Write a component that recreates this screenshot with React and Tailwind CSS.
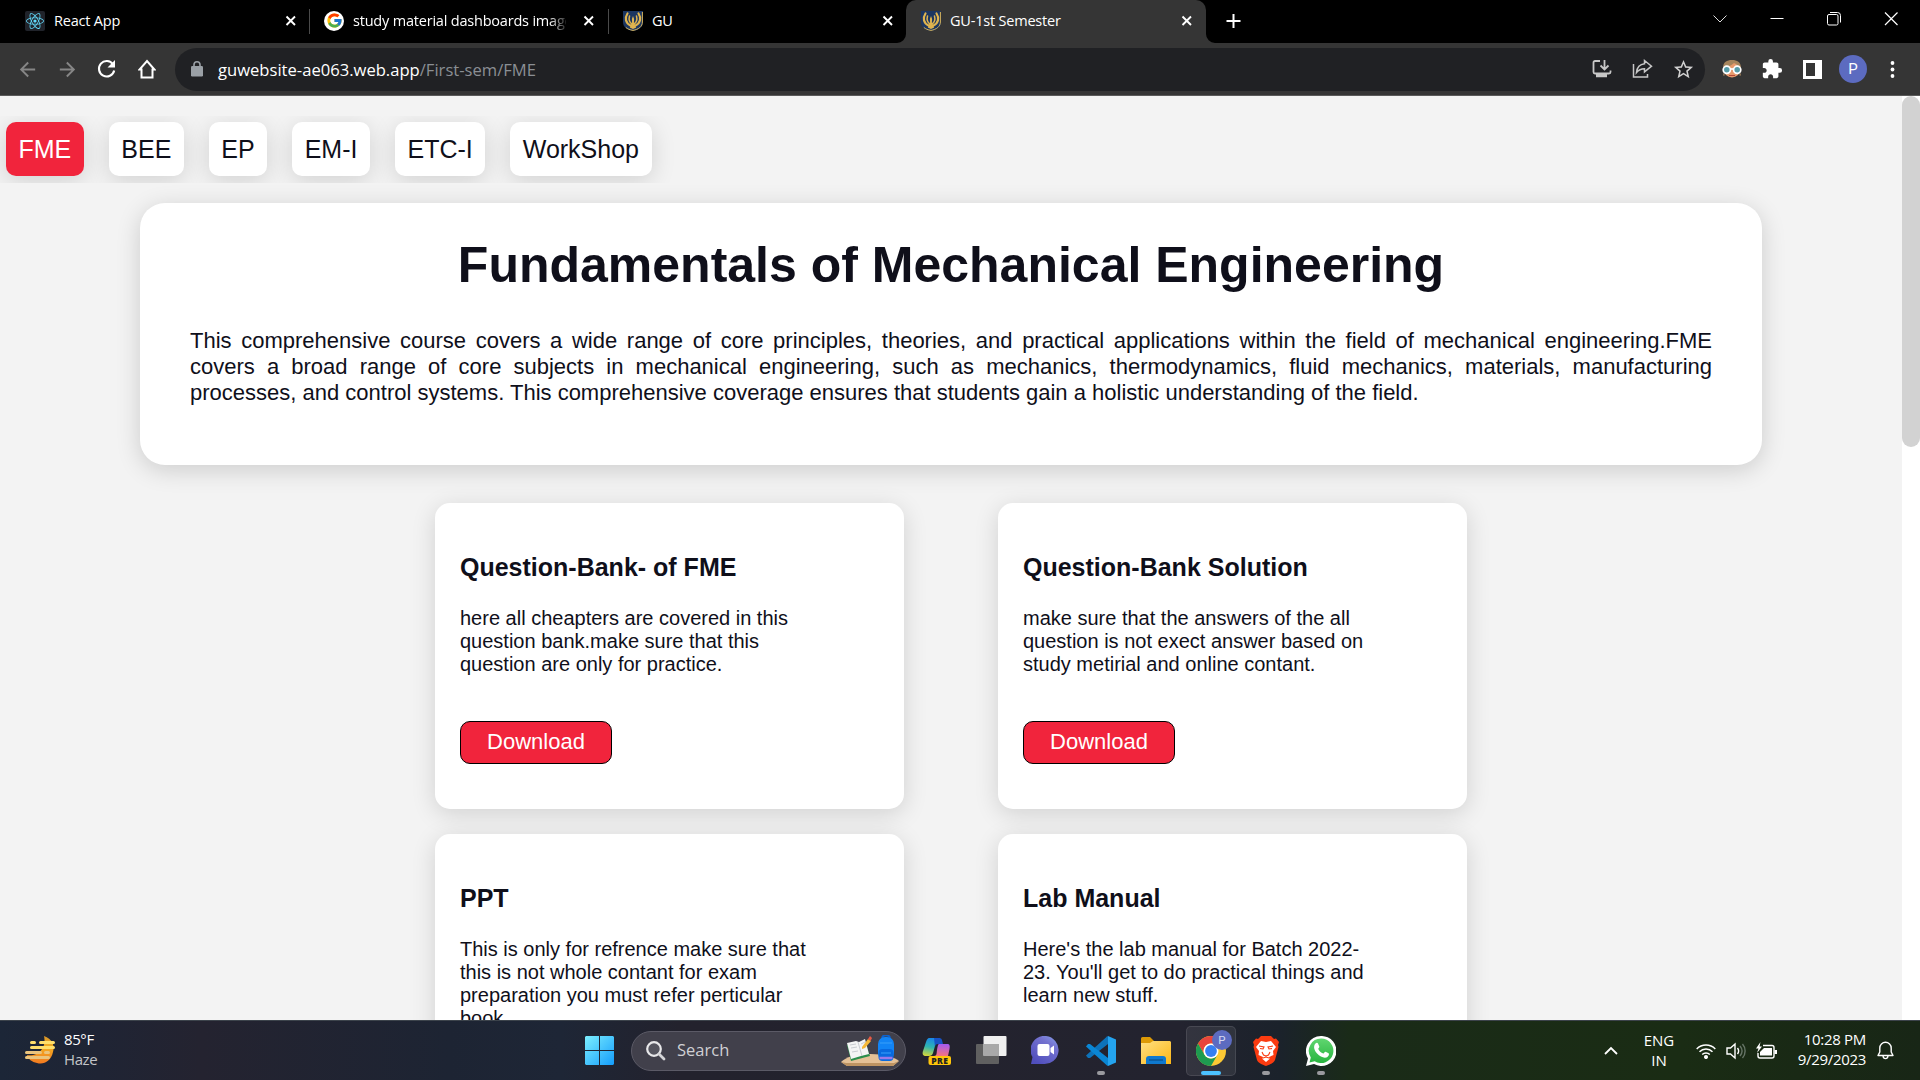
import React from "react";
import { FaReact } from "react-icons/fa";
import { FcGoogle } from "react-icons/fc";
import { MdExtension, MdStarBorder, MdArrowBack, MdArrowForward } from "react-icons/md";

const ui = "font-['Open_Sans','Noto_Sans',sans-serif]";

function GuCrest() {
  return (
    <svg width="20" height="20" viewBox="0 0 20 20" className="shrink-0">
      <path d="M0 0h20v11c0 5-4 8-10 9C4 19 0 16 0 11z" fill="#1c3661" />
      <path d="M19.400 1v10c0 4.500-4 7.500-9.400 8.400-3-.5-5.500-1.500-7.200-3" fill="none" stroke="#d6b35a" strokeWidth="1" />
      <g fill="none" stroke="#dfb44f" strokeLinecap="round">
        <path d="M4.500 2.500C1.500 7 2.500 12 7.500 14.500M15.500 2.500c3 4.500 2 9.500-3 12" strokeWidth="2.200" />
        <path d="M6.500 5C5.500 9 6.500 11.500 9 13M13.500 5C14.500 9 13.500 11.500 11 13" strokeWidth="1.500" />
      </g>
      <path d="M10 5l1.100 3-.2 3.500 2.300 5L10 18l-3.200-1.500 2.300-5L8.900 8z" fill="#dfb44f" />
    </svg>
  );
}

function CloseX() {
  return (
    <svg width="12" height="12" viewBox="0 0 12 12" className="shrink-0">
      <path d="M1.500 1.500l8.500 8.500M10 1.500L1.500 10" stroke="#fff" strokeWidth="1.900" />
    </svg>
  );
}

function Tab({ icon, title, className, titleClass = "" }) {
  return (
    <div className={"flex h-[43px] shrink-0 items-center pb-[2px] " + className}>
      {icon}
      <span className={"ml-[9px] flex-1 overflow-hidden whitespace-nowrap text-[14.500px] tracking-[-0.200px] text-white " + titleClass}>{title}</span>
      <CloseX />
    </div>
  );
}

function TabStrip() {
  return (
    <div className="flex h-[43px] items-start bg-black">
      <Tab
        className="w-[309px] pl-[25px] pr-[12px]"
        icon={
          <span className="flex size-5 items-center justify-center rounded-[2px] bg-[#20232a]">
            <FaReact size={18} color="#61dafb" />
          </span>
        }
        title="React App"
      />
      <span className="mt-[9px] h-[25px] w-px bg-[#4a4a4a]" />
      <Tab
        className="w-[298px] pl-[14px] pr-[13px]"
        icon={
          <span className="flex size-5 items-center justify-center rounded-full bg-white">
            <FcGoogle size={17} />
          </span>
        }
        title="study material dashboards images"
        titleClass="mr-[17px] [mask-image:linear-gradient(to_right,#000_196px,transparent_216px)]"
      />
      <span className="mt-[9px] h-[25px] w-px bg-[#4a4a4a]" />
      <Tab className="w-[297px] pl-[14px] pr-[12px]" icon={<GuCrest />} title="GU" />
      <div className="relative">
        <svg className="absolute -left-[9px] bottom-0" width="9" height="9" viewBox="0 0 9 9"><path d="M9 0v9H0a9 9 0 0 0 9-9" fill="#353535" /></svg>
        <Tab className="w-[300px] rounded-t-[10px] bg-[#353535] pl-[15px] pr-[13px]" icon={<GuCrest />} title="GU-1st Semester" />
        <svg className="absolute -right-[9px] bottom-0" width="9" height="9" viewBox="0 0 9 9"><path d="M0 0v9h9a9 9 0 0 1-9-9" fill="#353535" /></svg>
      </div>
      <svg className="ml-[20px] mt-[13px]" width="15" height="16" viewBox="0 0 15 16"><path d="M7.500 1v14M.5 8h14" stroke="#fff" strokeWidth="2" /></svg>
      <div className="ml-auto flex items-start pt-[12px] pr-[21px]">
        <svg width="14" height="14" viewBox="0 0 14 14"><path d="M.5 3.500l6.500 6.500 6.500-6.500" fill="none" stroke="#ddd" strokeWidth="1" /></svg>
        <svg className="ml-[43px]" width="14" height="14" viewBox="0 0 14 14"><path d="M.5 6.500h13" stroke="#fff" strokeWidth="1" /></svg>
        <svg className="ml-[43px]" width="14" height="14" viewBox="0 0 14 14"><g fill="none" stroke="#fff"><rect x=".5" y="2.500" width="10.500" height="10.500" rx="1.500" /><path d="M3 .5h7.500a3 3 0 0 1 3 3V10.500" /></g></svg>
        <svg className="ml-[43px]" width="15" height="14" viewBox="0 0 15 14"><path d="M1 .5l12.500 12.500M13.500.5L1 13" stroke="#fff" strokeWidth="1.200" /></svg>
      </div>
    </div>
  );
}

function Toolbar() {
  return (
    <div className="flex h-[53px] items-center border-b border-[#5a5a5a] bg-[#353535] text-white">
      <MdArrowBack size={23} color="#868686" className="ml-[16px]" />
      <MdArrowForward size={23} color="#868686" className="ml-[17px]" />
      <svg className="ml-[18px]" width="20" height="20" viewBox="0 0 20 20"><path d="M16 5.300A7.700 7.700 0 1 0 17.200 11.500" fill="none" stroke="#fff" strokeWidth="2.100" /><path d="M18 1v7.500h-7.500z" fill="#fff" /></svg>
      <svg className="ml-[21px]" width="18" height="20" viewBox="0 0 18 20"><path d="M3.500 18.500v-8H1.500L9 2l7.500 8.500h-2v8z" fill="none" stroke="#fff" strokeWidth="2" /></svg>
      <div className="ml-[19px] flex h-[43px] w-[1530px] items-center rounded-full bg-[#202124] pl-[16px]">
        <svg width="12" height="16" viewBox="0 0 12 16"><rect x="0" y="5" width="12" height="10.500" rx="1.200" fill="#9aa0a6" /><path d="M3 6V3.800a3 3 0 0 1 6 0V6" fill="none" stroke="#9aa0a6" strokeWidth="1.600" /></svg>
        <span className="ml-[15px] flex-1 pt-[2px] text-[16.600px]">
          <span className="text-white">guwebsite-ae063.web.app</span>
          <span className="text-[#8b8f94]">/First-sem/FME</span>
        </span>
        <svg width="20" height="20" viewBox="0 0 20 20" fill="none" stroke="#c7c7c7" strokeWidth="1.800"><path d="M8 2H3a1.500 1.500 0 0 0-1.500 1.500V13A1.500 1.500 0 0 0 3 14.500h14a1.500 1.500 0 0 0 1.500-1.500v-1.500M12.500 1v9M8.500 6.500l4 4 4-4" /><path d="M4 16.500h11" strokeWidth="3.500" /></svg>
        <svg className="ml-[20px]" width="21" height="20" viewBox="0 0 21 20" fill="none" stroke="#c7c7c7" strokeWidth="1.500"><path d="M1.500 5v13h14v-3" /><path d="M12.500 1.500l7 5.700-7 5.700v-3.200C9 9.700 6.500 11 4.500 13.500 5 9 7.500 5.300 12.500 4.800z" /></svg>
        <MdStarBorder size={23} color="#d0d0d0" className="ml-[19px] mr-[10px]" />
      </div>
      <svg className="ml-[17px]" width="20" height="20" viewBox="0 0 20 20">
        <circle cx="10" cy="10" r="8.500" fill="#e79a6c" /><path d="M1 9C1 3 5 1 10 1s9 2 9 8c-3-2-4-4-7-5-2 2-6 4-11 5" fill="#a5845c" />
        <path d="M1 14l2 2-1.500 1M19 14l-2 2 1.500 1" fill="#a5845c" />
        <g fill="#569ca8" stroke="#fff" strokeWidth="1.700"><circle cx="4.800" cy="10.800" r="3.600" /><circle cx="15.200" cy="10.800" r="3.600" /><path d="M8 10h4" /></g>
        <path d="M7 16.500h6" stroke="#b44839" />
      </svg>
      <MdExtension size={22} className="ml-[19px]" />
      <svg className="ml-[20px]" width="19" height="19" viewBox="0 0 19 19"><path d="M0 0h19v19H0zM3 3v13h9V3z" fill="#fff" fillRule="evenodd" /></svg>
      <span className="ml-[17px] flex size-7 items-center justify-center rounded-full bg-[#5c6bc0] font-[Roboto,sans-serif] text-[15px]">P</span>
      <svg className="ml-[23px]" width="5" height="17" viewBox="0 0 5 17"><g fill="#fff"><circle cx="2.500" cy="2" r="1.900" /><circle cx="2.500" cy="8.500" r="1.900" /><circle cx="2.500" cy="15" r="1.900" /></g></svg>
    </div>
  );
}

const subjects = ["FME", "BEE", "EP", "EM-I", "ETC-I", "WorkShop"];

const resources = [
  { title: "Question-Bank- of FME", lines: ["here all cheapters are covered in this", "question bank.make sure that this", "question are only for practice."] },
  { title: "Question-Bank Solution", lines: ["make sure that the answers of the all", "question is not exect answer based on", "study metirial and online contant."] },
  { title: "PPT", lines: ["This is only for refrence make sure that", "this is not whole contant for exam", "preparation you must refer perticular", "book."] },
  { title: "Lab Manual", lines: ["Here's the lab manual for Batch 2022-", "23. You'll get to do practical things and", "learn new stuff."] },
];

function Resource({ title, lines }) {
  return (
    <article className="h-[306px] rounded-[15px] bg-white px-[25px] pt-[50px] shadow-[0_5px_25px_rgba(0,0,0,0.14)]">
      <h3 className="text-[25px] font-bold leading-[29px]">{title}</h3>
      <p className="mt-[25px] h-[69px] whitespace-nowrap text-[20px] leading-[23px]">
        {lines.map((line) => (
          <span key={line} className="block">{line}</span>
        ))}
      </p>
      <button className="mt-[45px] h-[43px] w-[152px] rounded-[10px] border border-black bg-[#f1243c] pb-[2px] text-[22px] text-white">Download</button>
    </article>
  );
}

function Page() {
  return (
    <div className="flex h-[924px] bg-[#f3f3f3] font-['Liberation_Sans',Arial,sans-serif] text-[#0f0f1a]">
      <main className="w-[1902px] overflow-hidden">
        <nav className="mt-[20px] flex h-[67px] w-[677px] gap-[25px] overflow-hidden pl-[6px] pt-[6px]">
          {subjects.map((s) => (
            <span key={s} className={"flex h-[54px] shrink-0 items-center rounded-[10px] px-[12.500px] pt-[2px] text-[25px] shadow-[0_5px_25px_rgba(0,0,0,0.14)] " + (s === "FME" ? "bg-[#f1243c] text-white" : "bg-white")}>{s}</span>
          ))}
        </nav>
        <section className="ml-[140px] mt-[20px] h-[262px] w-[1622px] rounded-[25px] bg-white px-[50px] pt-[33px] shadow-[0_5px_25px_rgba(0,0,0,0.16)]">
          <h1 className="text-center text-[50px] font-bold leading-[58px]">Fundamentals of Mechanical Engineering</h1>
          <p className="mt-[34px] text-justify text-[22px] leading-[26px]">
            This comprehensive course covers a wide range of core principles, theories, and practical applications within the field of mechanical engineering.FME covers a broad range of core subjects in mechanical engineering, such as mechanics, thermodynamics, fluid mechanics, materials, manufacturing processes, and control systems. This comprehensive coverage ensures that students gain a holistic understanding of the field.
          </p>
        </section>
        <section className="ml-[435px] mt-[38px] grid grid-cols-[469px_469px] gap-x-[94px] gap-y-[25px]">
          {resources.map((r) => (
            <Resource key={r.title} {...r} />
          ))}
        </section>
      </main>
      <div className="w-[18px] bg-white">
        <div className="h-[351px] rounded-[9px] bg-[#d2d2d2]" />
      </div>
    </div>
  );
}

function WindowsLogo() {
  return (
    <svg width="29" height="29" viewBox="0 0 29 29">
      <defs><linearGradient id="win" x1="0" y1="0" x2="1" y2="1"><stop stopColor="#7ceefe" /><stop offset="1" stopColor="#149dfc" /></linearGradient></defs>
      <path d="M1 0h13v14H0V1zM15 0h13l1 1v13H15zM0 15h14v14H1l-1-1zM15 15h14v13l-1 1H15z" fill="url(#win)" />
    </svg>
  );
}

function SearchScene() {
  return (
    <svg width="58" height="32" viewBox="0 0 58 32">
      <path d="M0 27c5-5 14-8 29-8s24 3 29 7l-6 5H6z" fill="#e4c096" /><path d="M0 27l5 1h48l5-2-6 5H6z" fill="#bd9362" />
      <path d="M6 10l18-4 5 15-19 5z" fill="#2b8e4c" /><path d="M6 8l9-2 3 1 6-3 4 15-8 2-10 3z" fill="#f4f4f4" /><path d="M17 7l4 14M9 10l6-1M10 13l6-1M11 17l6-1M20 9l4-2M21 13l4-2" stroke="#c9ccd1" />
      <path d="M21 12l6-8 3 2-6 7-3 1z" fill="#f6b837" /><path d="M27 4l2-3 2 2-1.500 3z" fill="#e75a45" />
      <path d="M41 4c0-5 8-5 8 0" fill="none" stroke="#0d62cd" strokeWidth="2" /><rect x="37" y="2" width="16" height="23" rx="7" fill="#1284f5" /><rect x="37.500" y="14" width="15" height="12" rx="4" fill="#0869de" /><path d="M39 8h12M40 18h10" stroke="#399ffa" strokeWidth="1.200" /><path d="M38.500 23h13" stroke="#9b79e8" strokeWidth="2.500" />
    </svg>
  );
}

function CopilotPre() {
  return (
    <svg width="30" height="29" viewBox="0 0 30 29">
      <defs>
        <linearGradient id="cpa" x1=".5" y1="0" x2=".3" y2="1"><stop stopColor="#1a86e8" /><stop offset=".5" stopColor="#2fb5b0" /><stop offset="1" stopColor="#d4d83b" /></linearGradient>
        <linearGradient id="cpb" x1=".5" y1="0" x2=".4" y2="1"><stop stopColor="#a45af0" /><stop offset="1" stopColor="#f7747c" /></linearGradient>
      </defs>
      <path d="M7 1h11c-4 0-4 4-5 8l-2 7c-.5 2-2 3-4 3H4c-3 0-4-2-3-5l3-9c1-3 2-4 3-4" fill="url(#cpa)" />
      <path d="M12 1h5c3 0 3 2 4 6h-5c-2 0-3 1-3 3z" fill="#1753c5" />
      <path d="M17 7h8c3 0 3 2 2.500 5L26 19H12c3 0 2.500-3 3-6s1-6 2-6" fill="url(#cpb)" />
      <rect x="6.500" y="19" width="22.500" height="9" rx="2" fill="#ffc60a" />
      <text x="17.800" y="26.500" textAnchor="middle" fontSize="8.500" fontWeight="800" letterSpacing=".5" fill="#222" fontFamily="Open Sans, sans-serif">PRE</text>
    </svg>
  );
}

function TaskView() {
  return (
    <svg width="31" height="29" viewBox="0 0 31 29">
      <rect x="0" y="8" width="23" height="20" rx="1" fill="#606060" /><rect x="7.500" y="0" width="23" height="20" rx="1" fill="#f0f0f0" /><rect x="7.500" y="8" width="15.500" height="12" fill="#a9a9a9" />
    </svg>
  );
}

function ChatIcon() {
  return (
    <svg width="30" height="29" viewBox="0 0 30 29">
      <defs><linearGradient id="cht" x1="1" y1="0" x2=".3" y2="1"><stop stopColor="#88a2ec" /><stop offset=".35" stopColor="#7472cf" /><stop offset="1" stopColor="#504fbd" /></linearGradient></defs>
      <path d="M15 0a14 14 0 1 1-3 28H0l1.500-7A14 14 0 0 1 15 0" fill="url(#cht)" />
      <rect x="6.500" y="8" width="12" height="12" rx="2" fill="#fff" /><path d="M19.500 12l3.500-2.500v9L19.500 16z" fill="#fff" />
    </svg>
  );
}

function VsCode() {
  return (
    <svg width="30" height="30" viewBox="0 0 30 30">
      <path d="M22 8L4 22H2L0 19.500 21 .5 22 0z" fill="#0d72b9" />
      <path d="M22 22L4 8H2L0 10.500 21 29.500l1 .5z" fill="#0a86d4" />
      <path d="M22 0l8 3.500v23L22 30z" fill="#24a4ef" />
    </svg>
  );
}

function FolderIcon() {
  return (
    <svg width="30" height="27" viewBox="0 0 30 27">
      <defs><linearGradient id="fld" x1="0" y1="0" x2="1" y2="1"><stop stopColor="#ffe083" /><stop offset="1" stopColor="#fcb716" /></linearGradient></defs>
      <path d="M0 1.500A1.500 1.500 0 0 1 1.500 0H9l4 4v6H0z" fill="#dd9a06" /><path d="M0 6h9l3-2h17l1 1v22H0z" fill="url(#fld)" />
      <path d="M5 27v-5a3 3 0 0 1 3-3h14a3 3 0 0 1 3 3v5z" fill="#0f79cf" /><path d="M8 23h14" stroke="#0a4d88" strokeWidth="1.200" />
    </svg>
  );
}

function ChromeIcon() {
  return (
    <svg width="36" height="36" viewBox="0 0 36 36">
      <g transform="translate(0 6)">
        <circle cx="15" cy="15" r="15" fill="#fcc934" />
        <path d="M2 7.500A15 15 0 0 1 28 7.500H15a7.500 7.500 0 0 0-6.500 11.200z" fill="#e8453c" />
        <path d="M2 7.500l6.500 11.200a7.500 7.500 0 0 0 13 0L15 30A15 15 0 0 1 2 7.500" fill="#1e9b50" />
        <circle cx="15" cy="15" r="7.500" fill="#fff" /><circle cx="15" cy="15" r="5.900" fill="#357ff2" />
      </g>
      <circle cx="26" cy="10" r="10" fill="#5c6bc0" /><text x="26" y="14" textAnchor="middle" fontSize="11.500" fill="#d6daf2" fontFamily="Roboto, sans-serif">P</text>
    </svg>
  );
}

function BraveIcon() {
  return (
    <svg width="26" height="30" viewBox="0 0 26 30">
      <path d="M8 0h10l3 3 2-.5L26 6l-1 3 .5 2-3.500 13c-1 3-5 4.500-9 6-4-1.500-8-3-9-6L.5 11 1 9 0 6l3-3.500L5 3z" fill="#fb3b10" />
      <path d="M8 5l5 1 5-1 5 6-3 4 .5 4-4.500 2 .5 2L13 26l-3.500-3 .5-2-4.500-2 .5-4-3-4z" fill="#fff" />
      <path d="M6 10l5 1-1 2-3-.5M20 10l-5 1 1 2 3-.5M9 16l1.500 3L13 20l2.500-1L17 16M10 22l3-1 3 1" fill="none" stroke="#fb3b10" strokeWidth="1.100" />
    </svg>
  );
}

function WhatsAppIcon() {
  return (
    <svg width="30" height="30" viewBox="0 0 30 30">
      <defs><linearGradient id="wa" x1="0" y1="0" x2="0" y2="1"><stop stopColor="#60d670" /><stop offset="1" stopColor="#28b43f" /></linearGradient></defs>
      <path d="M15 0a15 15 0 1 1-7 28L0 30l2-7.500A15 15 0 0 1 15 0" fill="#fff" /><path d="M15.200 2.500a12.300 12.300 0 1 1-6.500 22.800L3.500 26.500l1.300-5A12.300 12.300 0 0 1 15.200 2.500" fill="url(#wa)" />
      <path d="M9.500 7.500c1-1 2-1 2.500 0l1.300 3c.3 1-1.300 2-1 2.500 1 2 2.500 3.500 5 4.500.6.200 1.500-2 2.300-1.700l3 1.500c1 .5 0 3.200-1.500 3.900-3 1.300-7-.5-10-3.700S7 10 9.500 7.500" fill="#fff" />
    </svg>
  );
}

function AppSlot({ children, running, active, className }) {
  return (
    <div className={"relative flex h-[50px] items-center justify-center " + (active ? "rounded-[5px] border border-white/10 bg-white/8 " : "") + className}>
      {children}
      {running && <span className="absolute bottom-[1px] h-[4px] w-[8px] rounded-full bg-[#9a9a9f]" />}
      {active && <span className="absolute bottom-[0px] left-[14px] h-[4px] w-[20px] rounded-full bg-[#4cc2ff]" />}
    </div>
  );
}

function Taskbar() {
  return (
    <footer className={"flex h-[60px] items-center border-t border-[#3c434b] bg-[linear-gradient(90deg,#1c2637_0px,#1f2434_100px,#242330_200px,#1d2433_450px,#1e2636_560px,#23222d_680px,#23232f_1180px,#1b222b_1280px,#1a2b18_1350px,#1a2c14_1680px,#182616_1920px)] text-white " + ui}>
      <svg className="ml-[25px]" width="30" height="29" viewBox="0 0 30 29">
        <defs><linearGradient id="moon" x1="0" y1="0" x2="0" y2="1"><stop stopColor="#d79429" /><stop offset=".4" stopColor="#f2ad22" /><stop offset="1" stopColor="#f37a20" /></linearGradient></defs>
        <path d="M19 0c8 3 11 9 9 16-2 9-9 13-16 11C7 26 3 23 2 19c10 2 20-6 17-19" fill="url(#moon)" />
        <g strokeWidth="3" strokeLinecap="round"><path d="M6.500 6.500h3M15.500 6.500h13M6.500 11.500h22" stroke="#ffdf6b" /><path d="M1.500 16.500h14M20.500 16.500h3M1.500 21.500h22" stroke="#ebc47c" /></g>
      </svg>
      <div className="ml-[9px] w-[60px] pb-[4px] text-[15px] leading-[20px] tracking-[-0.400px]"><div>85°F</div><div className="text-[#c3c4c8]">Haze</div></div>
      <div className="ml-[461px]"><WindowsLogo /></div>
      <div className="ml-[17px] flex h-[40px] w-[275px] items-center rounded-full border border-[#5b5a66] bg-[#41404b] pl-[14px] pr-[6px]">
        <svg width="20" height="20" viewBox="0 0 20 20"><circle cx="8" cy="8" r="6.800" fill="#55555f" stroke="#e8e8ea" strokeWidth="2.200" /><path d="M13 13l5 5" stroke="#d5d5d8" strokeWidth="2.800" strokeLinecap="round" /></svg>
        <span className="ml-[11px] flex-1 text-[16.500px] text-[#d0d0d4]">Search</span>
        <SearchScene />
      </div>
      <div className="ml-[5px] flex items-center gap-[5px]">
        <AppSlot className="w-[50px] pl-[2px] pt-[1px]"><CopilotPre /></AppSlot>
        <AppSlot className="w-[50px]"><TaskView /></AppSlot>
        <AppSlot className="w-[50px]"><ChatIcon /></AppSlot>
        <AppSlot className="w-[50px]" running><VsCode /></AppSlot>
        <AppSlot className="w-[50px]"><FolderIcon /></AppSlot>
        <AppSlot className="w-[50px] pb-[6px] pl-[5px]" active><ChromeIcon /></AppSlot>
        <AppSlot className="w-[50px]" running><BraveIcon /></AppSlot>
        <AppSlot className="w-[50px]" running><WhatsAppIcon /></AppSlot>
      </div>
      <div className="ml-auto flex items-center pr-[26px]">
        <svg width="14" height="9" viewBox="0 0 14 9"><path d="M1 8l6-6 6 6" fill="none" stroke="#fff" strokeWidth="1.800" /></svg>
        <div className="ml-[22px] w-[38px] pb-[2px] text-center text-[15px] leading-[20px]"><div>ENG</div><div>IN</div></div>
        <svg className="ml-[18px]" width="20" height="16" viewBox="0 0 20 16" fill="none" stroke="#fff" strokeWidth="1.500"><path d="M.7 6a13 13 0 0 1 18.600 0M3.500 8.800a9 9 0 0 1 13 0M6.200 11.600a5.300 5.300 0 0 1 7.600 0" /><circle cx="10" cy="14" r="1.300" fill="#fff" /></svg>
        <svg className="ml-[10px]" width="21" height="18" viewBox="0 0 21 18" fill="none" stroke="#fff" strokeWidth="1.400"><path d="M1 6h3.500L9 2v14l-4.500-4H1z" /><path d="M11.500 6c1.500 2 1.500 4 0 6" /><path d="M14 4c2.500 3 2.500 7 0 10M16.500 2c3.500 4 3.500 10 0 14" stroke="#667466" /></svg>
        <svg className="ml-[9px]" width="21" height="17" viewBox="0 0 21 17"><path d="M7 3.500h9a2 2 0 0 1 2 2V14a2 2 0 0 1-2 2H4a2 2 0 0 1-2-2v-3" fill="none" stroke="#fff" strokeWidth="1.400" /><path d="M8 6h8v7.500H4V10zM18.500 8H21v4h-2.500zM4.500 0L0 6.500h2.500L1 11l5-6.500H3.500z" fill="#fff" /></svg>
        <div className="ml-[14px] w-[75px] whitespace-nowrap pb-[4px] text-right text-[15px] leading-[20px] tracking-[-0.300px]"><div>10:28 PM</div><div>9/29/2023</div></div>
        <svg className="ml-[11px]" width="17" height="19" viewBox="0 0 17 19" fill="none" stroke="#fff" strokeWidth="1.400"><path d="M1 14.500l1.800-3.500V7a5.700 5.700 0 0 1 11.400 0v4l1.800 3.500zM6 15c.5 3.500 4.500 3.500 5 0" strokeLinejoin="round" /></svg>
      </div>
    </footer>
  );
}

export default function App() {
  return (
    <div className={"h-[1080px] w-[1920px] overflow-hidden bg-black " + ui}>
      <TabStrip />
      <Toolbar />
      <Page />
      <Taskbar />
    </div>
  );
}
